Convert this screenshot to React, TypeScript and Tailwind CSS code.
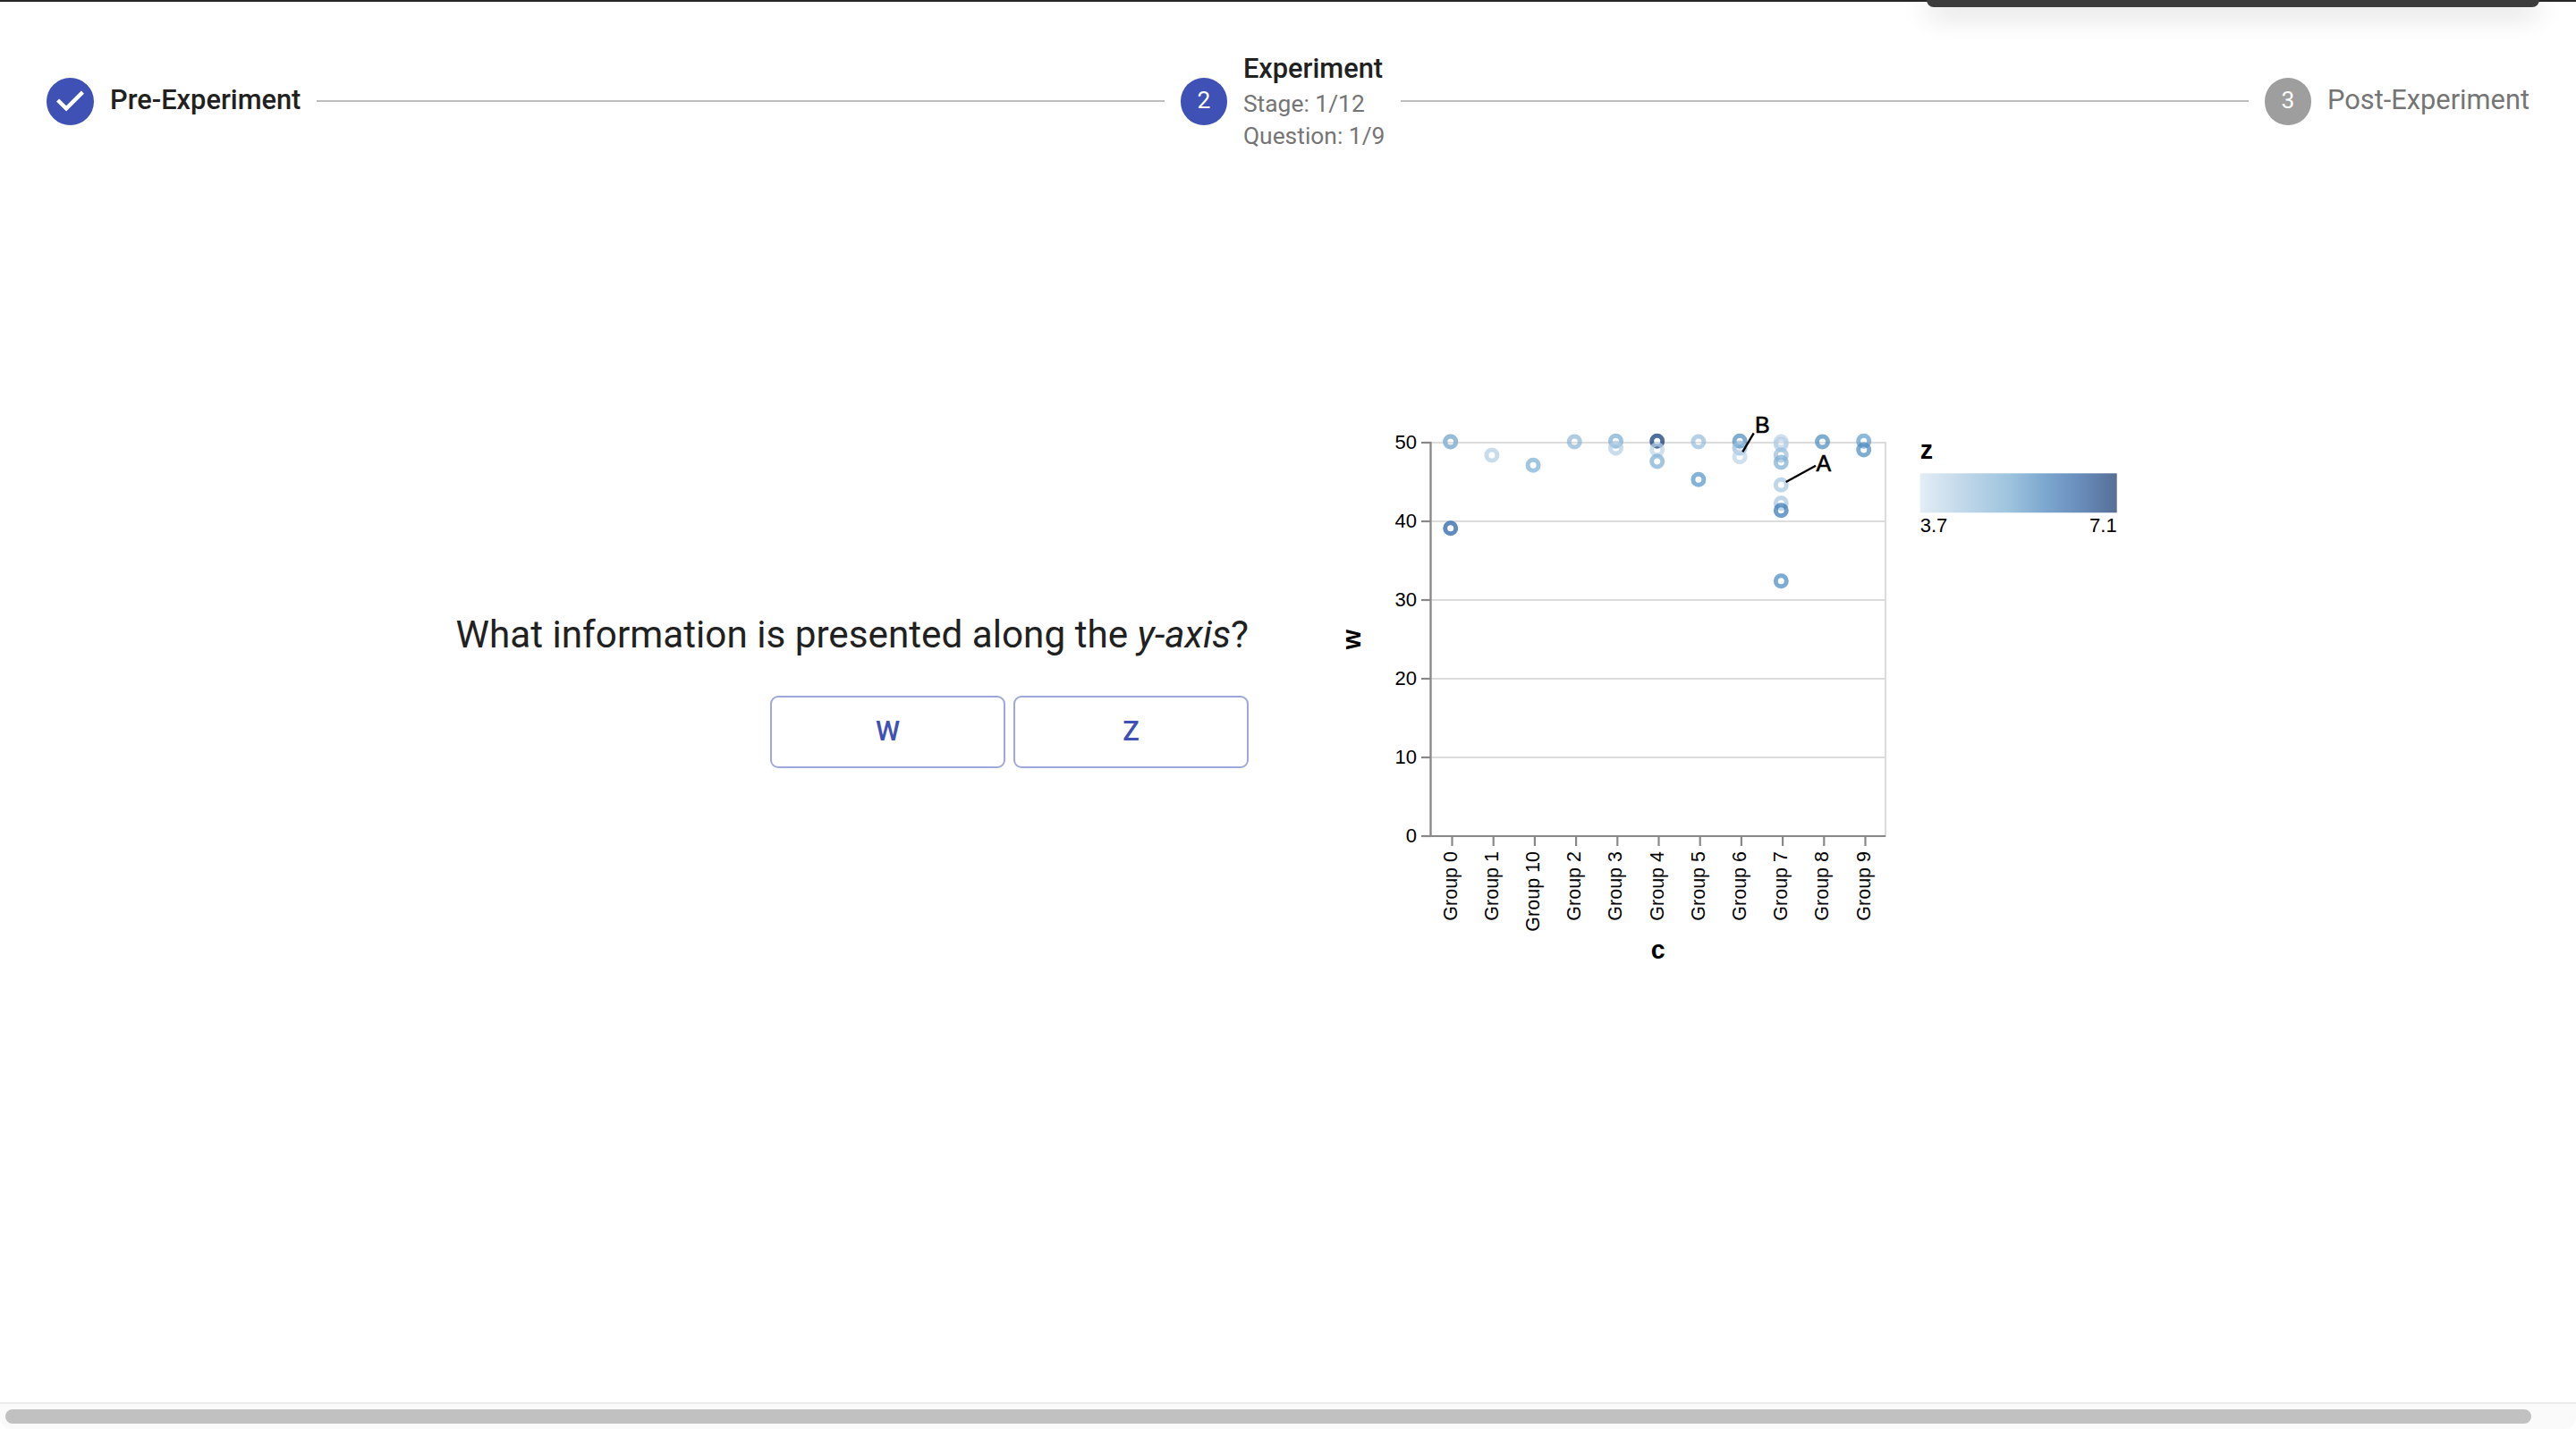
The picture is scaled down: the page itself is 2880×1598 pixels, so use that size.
const groups = ['Group 0', 'Group 1', 'Group 10', 'Group 2', 'Group 3', 'Group 4', 'Group 5', 'Group 6', 'Group 7', 'Group 8', 'Group 9']

// [column, y in page px, colour]
const points: [number, number, string][] = [
  [0, 494, '#8bb5d6'],
  [0, 494, '#8bb5d6'],
  [0, 590.7, '#1a5ba4'],
  [1, 509, '#b2cde4'],
  [2, 520.3, '#7caed3'],
  [3, 494, '#8bb5d6'],
  [4, 493.3, '#75abd0'],
  [4, 501, '#b2cde4'],
  [5, 493.3, '#043072'],
  [5, 502.7, '#bbd3e7'],
  [5, 516, '#7caed3'],
  [6, 494, '#95bcdb'],
  [6, 536.3, '#5093c9'],
  [7, 493.3, '#488abf'],
  [7, 501, '#95bcdb'],
  [7, 510.7, '#bbd3e7'],
  [8, 494, '#bbd3e7'],
  [8, 497, '#b2cde4'],
  [8, 509, '#95bcdb'],
  [8, 517, '#7caed3'],
  [8, 542.3, '#a5c6df'],
  [8, 562.7, '#a5c6df'],
  [8, 570.7, '#3175b2'],
  [8, 649.7, '#4588c0'],
  [9, 494, '#488abf'],
  [10, 493.3, '#5f9bc7'],
  [10, 503, '#488abf'],
]

const yTicks = [
  { label: '50', y: 495 },
  { label: '40', y: 583 },
  { label: '30', y: 671 },
  { label: '20', y: 759 },
  { label: '10', y: 847 },
  { label: '0', y: 935 },
]

const Chart = () => {
  const font = '"Liberation Sans", Arial, sans-serif'
  return (
    <svg width="920" height="660" viewBox="1480 440 920 660" style={{ fontFamily: font }} className="block shrink-0">
      <defs>
        <linearGradient id="legendRamp">
          <stop offset="0%" stopColor="#e3edf5" />
          <stop offset="25%" stopColor="#bcd5e8" />
          <stop offset="45%" stopColor="#9ec4de" />
          <stop offset="62%" stopColor="#7fa9d0" />
          <stop offset="80%" stopColor="#6a8fbd" />
          <stop offset="100%" stopColor="#566f96" />
        </linearGradient>
      </defs>

      <rect x="1599.5" y="495" width="508.5" height="440" fill="none" stroke="#ddd" strokeWidth="2.2" />
      {yTicks.map((t) => (
        <g key={t.label}>
          <line x1="1600" x2="2108" y1={t.y} y2={t.y} stroke="#ddd" strokeWidth="2.2" />
          <line x1="1589" x2="1600" y1={t.y} y2={t.y} stroke="#888" strokeWidth="2.2" />
          <text x="1584" y={t.y + 7.4} textAnchor="end" fontSize="22" fill="#000">{t.label}</text>
        </g>
      ))}
      <line x1="1599.5" x2="1599.5" y1="494" y2="936" stroke="#888" strokeWidth="2.2" />
      <line x1="1589" x2="2108" y1="935" y2="935" stroke="#888" strokeWidth="2.2" />

      {groups.map((g, i) => {
        const tx = 1623.5 + i * 46.2
        return (
          <g key={g}>
            <line x1={tx} x2={tx} y1="935" y2="946" stroke="#888" strokeWidth="2.2" />
            <text x={tx + 5} y="952" textAnchor="end" fontSize="21.5" fill="#000" transform={`rotate(-90 ${tx + 5} 952)`}>{g}</text>
          </g>
        )
      })}

      {points.map(([col, y, color], i) => (
        <circle key={i} cx={1621.7 + col * 46.2} cy={y} r="6" fill="none" stroke={color} strokeWidth="5" strokeOpacity="0.7" />
      ))}

      <line x1="1960.7" y1="484.3" x2="1948.3" y2="505.3" stroke="#000" strokeWidth="2.4" />
      <line x1="2030" y1="520.7" x2="1996.7" y2="539" stroke="#000" strokeWidth="2.4" />
      <text x="1962" y="483.5" fontSize="25" fill="#000" stroke="#000" strokeWidth="0.6">B</text>
      <text x="2030.5" y="526.7" fontSize="25" fill="#000" stroke="#000" strokeWidth="0.6">A</text>

      <text x="1853.7" y="1071.7" textAnchor="middle" fontSize="28.6" fontWeight="700" fill="#000">c</text>
      <text x="1520.8" y="715" textAnchor="middle" fontSize="28.6" fontWeight="700" fill="#000" transform="rotate(-90 1520.8 715)">w</text>

      <text x="2146.7" y="513" fontSize="28.6" fontWeight="700" fill="#000">z</text>
      <rect x="2146.7" y="529.3" width="220" height="44" fill="url(#legendRamp)" />
      <text x="2146.7" y="595" fontSize="22" fill="#000">3.7</text>
      <text x="2366.7" y="595" textAnchor="end" fontSize="22" fill="#000">7.1</text>
    </svg>
  )
}

const StepCircle = ({ children, active = true }: { children?: React.ReactNode; active?: boolean }) => (
  <div className={`flex h-[53px] w-[52px] shrink-0 items-center justify-center rounded-full text-[26.4px] text-white ${active ? 'bg-[#3f51b5]' : 'bg-[#9e9e9e]'}`}>
    {children}
  </div>
)

const Connector = () => <div className="mx-[18px] h-[2px] flex-1 bg-[#bdbdbd]" />

export default function App() {
  return (
    <div className="relative flex h-screen w-full flex-col overflow-hidden bg-black font-['Roboto',sans-serif]">
      <div className="flex min-h-0 flex-1 flex-col bg-white">
        <div className="h-[2px] shrink-0 bg-[#262626]" />
        <div className="absolute left-[2154px] top-0 h-[8px] w-[685px] rounded-b-[12px] bg-[#3c3c3c] shadow-[0_6px_30px_rgba(0,0,0,0.3)]" />

        <div className="flex h-[222px] shrink-0 items-center px-[52px]">
          <div className="relative h-[53px] w-[53px] shrink-0">
            <svg viewBox="0 0 24 24" className="h-[53px] w-[53px] fill-[#3f51b5]">
              <path d="M12 0a12 12 0 1 0 0 24 12 12 0 0 0 0-24zm-2 17l-5-5 1.4-1.4 3.6 3.6 7.6-7.6L19 8l-9 9z" />
            </svg>
          </div>
          <span className="ml-[18px] pb-[1px] text-[30.8px] font-medium text-[#212121]">Pre-Experiment</span>
          <Connector />
          <StepCircle>2</StepCircle>
          <div className="ml-[18px] flex flex-col pb-[2px]">
            <span className="text-[30.8px] font-medium leading-[43px] text-[#212121]">Experiment</span>
            <span className="text-[26.4px] leading-[36px] text-[#757575]">Stage: 1/12</span>
            <span className="text-[26.4px] leading-[36px] text-[#757575]">Question: 1/9</span>
          </div>
          <Connector />
          <StepCircle active={false}>3</StepCircle>
          <span className="ml-[18px] pb-[1px] text-[30.8px] text-[#757575]">Post-Experiment</span>
        </div>

        <div className="flex items-start pl-[500px] pt-[216px]">
          <div className="mt-[238px] flex w-[896px] flex-col items-end">
            <p className="whitespace-nowrap text-[42.24px] leading-[64px] text-[#212121]">
              What information is presented along the <em>y-axis</em>?
            </p>
            <div className="mt-[36px] flex gap-[9px]">
              <button className="h-[81px] w-[263px] rounded-[9px] border-2 border-[#9fa8da] text-[30.8px] font-medium text-[#3f51b5]">W</button>
              <button className="h-[81px] w-[263px] rounded-[9px] border-2 border-[#9fa8da] text-[30.8px] font-medium text-[#3f51b5]">Z</button>
            </div>
          </div>
          <div className="ml-[84px]">
            <Chart />
          </div>
        </div>

        <div className="mt-auto h-[30px] shrink-0 rounded-b-[12px] border-t-2 border-[#ebebeb] bg-[#fafafa] pl-[6px] pt-[6px]">
          <div className="h-[16px] w-[2824px] rounded-full bg-[#c1c1c1]" />
        </div>
      </div>
    </div>
  )
}
